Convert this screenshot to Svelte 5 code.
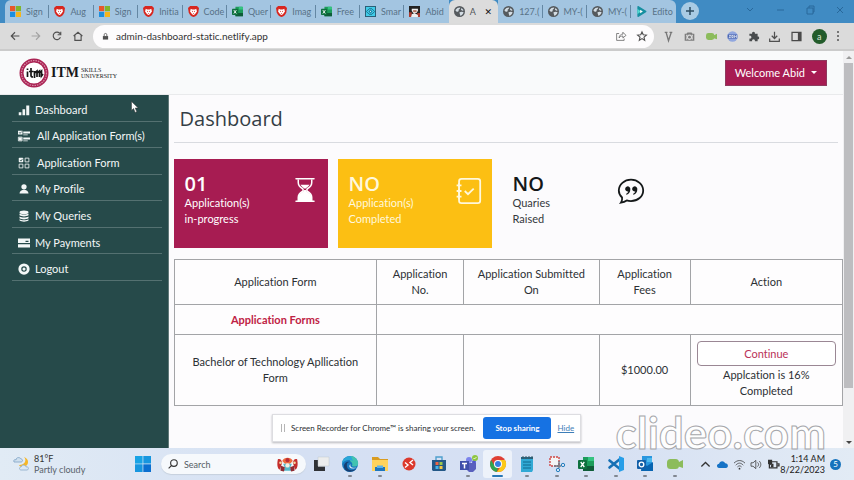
<script>
  const tabs = [
    { icon: 'microsoft', title: 'Sign' },
    { icon: 'shield', title: 'Aug' },
    { icon: 'microsoft', title: 'Sign' },
    { icon: 'shield', title: 'Initia' },
    { icon: 'shield', title: 'Code' },
    { icon: 'excel', title: 'Quer' },
    { icon: 'shield', title: 'Imag' },
    { icon: 'excel', title: 'Free' },
    { icon: 'smart', title: 'Smar' },
    { icon: 'photo', title: 'Abid' },
    { icon: 'globe', title: 'A', active: true },
    { icon: 'globe', title: '127.(' },
    { icon: 'globe', title: 'MY-(' },
    { icon: 'globe', title: 'MY-(' },
    { icon: 'clideo', title: 'Edito' }
  ];

  const menu = [
    { icon: 'bars', label: 'Dashboard' },
    { icon: 'checks', label: 'All Application Form(s)', wide: true },
    { icon: 'grid', label: 'Application Form', wide: true },
    { icon: 'person', label: 'My Profile' },
    { icon: 'database', label: 'My Queries' },
    { icon: 'card', label: 'My Payments' },
    { icon: 'logout', label: 'Logout' }
  ];

  const cards = [
    { tone: 'maroon', count: '01', lines: ['Application(s)', 'in-progress'], icon: 'hourglass' },
    { tone: 'yellow', count: 'NO', lines: ['Application(s)', 'Completed'], icon: 'journal' },
    { tone: 'plain', count: 'NO', lines: ['Quaries', 'Raised'], icon: 'quote' }
  ];

  const extensions = ['letterV', 'camera', 'recorder', 'zoomer', 'puzzle', 'download', 'panel'];

  const apps = [
    { icon: 'taskview', name: 'Task view' },
    { icon: 'edge', name: 'Edge', open: true },
    { icon: 'folder', name: 'File Explorer', open: true },
    { icon: 'remote', name: 'Remote' },
    { icon: 'store', name: 'Store' },
    { icon: 'teams', name: 'Teams', open: true },
    { icon: 'chrome', name: 'Chrome', active: true },
    { icon: 'notepad', name: 'Notepad', open: true },
    { icon: 'snip', name: 'Snipping Tool', open: true },
    { icon: 'excel', name: 'Excel', open: true },
    { icon: 'vscode', name: 'VS Code', open: true },
    { icon: 'outlook', name: 'Outlook', open: true },
    { icon: 'recorder', name: 'Screen Recorder', open: true }
  ];

  const art = {
    microsoft: '<path fill="#e8562a" d="M0 0h7.5v7.5H0z"/><path fill="#7fb52c" d="M8.500 0H16v7.500H8.500z"/><path fill="#1b8fe0" d="M0 8.500h7.500V16H0z"/><path fill="#f5b51c" d="M8.500 8.500H16V16H8.500z"/>',
    shield: '<path fill="#d8261f" d="M3 0h10l3 3-1 6c-1 4-4 6-7 7-3-1-6-3-7-7L0 3z"/><path fill="#fff" d="M4 4l2 1h4l2-1 1 4-3 4-2 1-2-1-3-4z"/><path fill="#d8261f" d="M5.500 6.500l2 1.500-1 1zm5 0l-2 1.500 1 1zM7 10h2l-1 1.500z"/>',
    excel: '<path fill="#1d9c5b" d="M5 1h10a1 1 0 0 1 1 1v12a1 1 0 0 1-1 1H5z"/><path fill="#35c481" d="M10 1h5a1 1 0 0 1 1 1v3h-6z"/><path fill="#0f5c38" d="M5 10h11v4a1 1 0 0 1-1 1H5z"/><rect y="4" width="9" height="9" rx="1" fill="#0e703e"/><path d="M2.700 6l3.600 5M6.300 6l-3.600 5" stroke="#fff" stroke-width="1.300"/>',
    smart: '<rect x=".7" y=".7" width="14.600" height="14.600" fill="#41cce9" stroke="#285d75" stroke-width="1.400"/><path d="M2 8l4-4h4l4 4-4 4H6z" fill="none" stroke="#14617e" stroke-width="1.200"/><path d="M5 8l3-3 3 3-3 3z" fill="#17779a"/><circle cx="8" cy="8" r="1" fill="#bdf4ff"/>',
    photo: '<path fill="#222" d="M0 0h16v16H0z"/><path fill="#aa392f" d="M0 9h4v7H0zM12 10h4v6h-4z"/><path fill="#eee" d="M4 4h9v3l-2 3H6L4 7zM4 12l4-2 5 3v3H3z"/><path fill="#b57664" d="M6 6h5v3H6z"/>',
    globe: '<circle cx="8" cy="8" r="8" fill="#555a5e"/><path fill="#d4dde4" d="M2 6c2-3 4-4 7-4 0 2-1 2-2 3s1 2-1 3-2 0-4-2zM8 9c2-1 5-1 6 0-1 3-3 5-5 5 0-2-1-3-1-5zM11 3l3 3-2 1-2-2z"/>',
    clideo: '<path fill="#168fa0" d="M2 1c0-1 1-1 2-.500L14.500 7c1 .5 1 1.500 0 2L4 15.500c-1 .5-2 .5-2-.500z"/><path fill="#52d7cf" d="M2 4l5 4-5 4z"/><path fill="#fff" d="M6 5.500l4 2.500-4 2.500z"/>',
    back: '<path d="M15 8H2M8 2L2 8l6 6" class="line"/>',
    forward: '<path d="M1 8h13M8 2l6 6-6 6" class="line"/>',
    reload: '<path d="M13.500 10A6 6 0 1 1 13 4.500M14 1v5H9" class="line"/>',
    home: '<path d="M1 8l7-6 7 6M3 7v8h10V7" class="line"/>',
    lock: '<path fill="currentColor" d="M2 7h12v8H2z"/><path d="M5 7V4a3 3 0 0 1 6 0v3" class="line"/>',
    share: '<path d="M5 4H1v11h12v-3M5 11c0-4 3-6 6-6V2l5 5-5 4V8c-3 0-5 1-6 3z" class="thin"/>',
    star: '<path d="M8 1.500l2 4.500 5 .5-3.800 3.300L12.300 15 8 12.200 3.700 15l1.100-5.200L1 6.500l5-.500z" class="line"/>',
    letterV: '<path d="M2.500 2h4M9.500 2h4M4.500 2L8 14l4-12" fill="none" stroke="#777" stroke-width="2"/>',
    camera: '<path fill="#7d7d7d" fill-rule="evenodd" d="M5 2h6l1.500 2H15v10H1V4h2.500zm3 3a4 4 0 1 0 .01 0zM3 5.500v7h2C3 10 3 8 5 5.500zm10 7v-7h-2c2 2.500 2 4.500 0 7z"/><circle cx="8" cy="9" r="2" fill="#7d7d7d"/>',
    recorder: '<rect y="3" width="12" height="10" rx="3.500" fill="#8cbc5c"/><path fill="#8cbc5c" d="M10 7l6-3v8l-6-2z"/>',
    zoomer: '<circle cx="8" cy="8" r="7.500" fill="#91a7df"/><path fill="#4a66b0" d="M1 5h14v6H1z"/><path d="M3 6.500h2.500L3 9.500h2.500M7 6.500h2v3H7zM11 10V6.500l1.500 1.500L14 6.500V10" fill="none" stroke="#fff"/>',
    puzzle: '<path fill="#484b4d" d="M2 4h4c-1-4 5-4 4 0h4v4c3-1 3 5 0 4v3h-4c1-4-5-4-4 0H2v-4c4 1 4-5 0-4z"/>',
    download: '<path d="M8 1v10M4 7l4 4 4-4M1 11v4h14v-4" class="line"/>',
    panel: '<path fill="none" stroke="#4a4a4a" stroke-width="1.800" d="M1.500 2h13v12h-13z"/><path fill="#4a4a4a" d="M10 2h4.500v12H10z"/>',
    bars: '<path fill="currentColor" d="M1 11h3.500v4H1zM6 7h3.500v8H6zM11 2h4v13h-4z"/>',
    checks: '<path d="M7 2h9v2.500H7zM7 10h9v2.500H7zM7 6h6v1H7zM7 14h6v1H7zM0 1h6v5H0zM1 10h4v4H1z" fill="currentColor"/><path d="M.5 9.500h5v5h-5z" class="thin"/><path d="M1.500 3l1.200 1.500L5 2" fill="none" stroke="#264a4a"/>',
    grid: '<path d="M9.500 1.500h5v5h-5zM1.500 9.500h5v5h-5zM9.500 9.500h5v5h-5z" class="thin"/><rect x="1" y="1" width="6" height="6" rx="1" fill="currentColor"/><path d="M2.500 4l1.500 1.500L6 2.500" fill="none" stroke="#264a4a"/>',
    person: '<circle cx="8" cy="5" r="3.500" fill="currentColor"/><path fill="currentColor" d="M2 14c0-3 3-5 6-5s6 2 6 5z"/>',
    database: '<ellipse cx="8" cy="3" rx="6" ry="2.500" fill="currentColor"/><path fill="currentColor" d="M2 4.500c3 2 9 2 12 0V7c-3 2-9 2-12 0zM2 8.500c3 2 9 2 12 0V11c-3 2-9 2-12 0zM2 12.300c3 2 9 2 12 0V14c-3 2-9 2-12 0z"/>',
    card: '<path fill="currentColor" fill-rule="evenodd" d="M0 2h16v6H0zM0 9.500h16V14H0zM10 5h4v1.500h-4z"/>',
    logout: '<circle cx="8" cy="8" r="7.500" fill="currentColor"/><circle cx="8" cy="8" r="3.700" fill="#264a4a"/><path fill="currentColor" d="M8 5.500L10.500 8 8 10.500 5.500 8z"/>',
    hourglass: '<path fill="currentColor" d="M2 1a.5.5 0 0 1 0-1h12a.5.5 0 0 1 0 1zm0 15a.5.5 0 0 1 0-1h12a.5.5 0 0 1 0 1z"/><path d="M3.500 1v2c0 2 1 3 2.700 4 .8.500.8 1.500 0 2-1.700 1-2.700 2-2.700 4v2h9v-2c0-2-1-3-2.700-4-.8-.500-.8-1.500 0-2 1.700-1 2.700-2 2.700-4V1" fill="none" stroke="currentColor"/><path fill="currentColor" d="M5 4.500h6c-.5 1-1.500 1.700-2.500 2.500h-1C6.500 6.200 5.500 5.500 5 4.500M3.500 15v-2c.5-3 3-3 4-5h1c1 2 3.500 2 4 5v2z"/>',
    journal: '<rect x="2.500" y=".5" width="13" height="15" rx="1.500" class="thin"/><path d="M1 4.500h3M1 8h3M1 11.500h3M2.500 3v3M2.500 6.500v3M2.500 10v3M6 8l2 2 3.500-3.500" class="thin"/>',
    quote: '<path d="M2.500 12C1.200 10.800.5 9.400.5 7.700.5 4 3.900 1 8 1s7.500 3 7.500 6.700S12.100 14.200 8 14.200c-1 0-1.800-.1-2.600-.4-1.100.8-2.200 1.200-3.600 1.400.6-.8.900-2 .7-3.200z" class="thin"/><path fill="currentColor" d="M7.200 7.800a1.600 1.600 0 1 1 .4-1c0 2-.9 3-2.300 3.500l-.4-.5c1-.5 1.500-1 1.500-1.900zM11.500 7.800a1.600 1.600 0 1 1 .4-1c0 2-.9 3-2.300 3.500l-.4-.5c1-.5 1.500-1 1.500-1.900z"/>',
    weather: '<path fill="#f5b728" d="M11 1c3 3 1 8-5 8 2 4 9 2 9-3 0-2-1-4-4-5z"/><path fill="#cfe0ef" stroke="#7da1c4" stroke-width=".8" d="M1 6c-1-2 1-3 2-2 0-3 4-3 5-1 2 0 2 3 0 3z"/><path fill="#dbe8f5" stroke="#8babc9" stroke-width=".8" d="M8 14c-2 0-2-3 0-3 1-3 5-2 5 0 3-1 3 3 1 3z"/>',
    windows: '<path fill="#18a3e5" d="M0 0h7.600v7.600H0z"/><path fill="#1796df" d="M8.300 0H16v7.600H8.300zM0 8.300h7.600V16H0z"/><path fill="#0b6fd0" d="M8.300 8.300H16V16H8.300z"/>',
    search: '<circle cx="9.500" cy="6.500" r="5.300" class="line"/><path d="M5.500 10.500L1 15" class="line"/>',
    pinwheel: '<path fill="#c52e2c" d="M1 2c3-1 4 1 5 4l-3 8c-3-2-3-7-2-12zM23 2c-3-1-4 1-5 4l3 8c3-2 3-7 2-12z"/><path fill="#ef6b3d" d="M6 4c2-5 10-5 12 0l-3 3H9z"/><path fill="#54b8c9" d="M7 7h10l-2 5 2 3H7l2-3z"/><path fill="#902b32" d="M4 9l5 2-1 5-4-1zM20 9l-5 2 1 5 4-1z"/><circle cx="12" cy="3" r="2.300" fill="#b92e38"/><circle cx="12" cy="9" r="2.500" fill="#f4eee1"/><circle cx="4" cy="6" r="1.500" fill="#f3d9a1"/><circle cx="20" cy="6" r="1.500" fill="#f3d9a1"/>',
    taskview: '<path fill="#303236" d="M1 4h11v11H1z"/><path fill="#eceded" stroke="#b9bfc6" stroke-width=".4" d="M5 1h11v9H5z"/><path fill="#a4a8ac" d="M5 10h7v1H5z"/>',
    edge: '<circle cx="8" cy="8" r="8" fill="#1877bd"/><path fill="#42c3b0" d="M9 0c5 .5 8 5 7 8.500-1 2.500-5 2.500-6 1.500 1-2 0-4-2-5z"/><path fill="#2aa7d8" d="M0 8C0 3 4 0 9 0l2 5C7 3 2 4 0 8z"/><path fill="#163f73" d="M5 8c-1 5 3 8 9 5-3 4-11 4-12-2-.5-4 3-6 6-5-2 0-3 1-3 2z"/><path fill="#dce6f4" d="M8.500 8c-1 3 2 4.500 6 3.500-2 1.500-6 1.500-7-.5-.5-1 0-2 1-3z"/>',
    folder: '<path fill="#d99c20" d="M0 1h6l2 2h8v5H0z"/><path fill="#ffd35c" d="M0 4h16v11H0z"/><path fill="#1d75bd" d="M3 11h10v4H3z"/><path fill="#5db2e7" d="M5 9.500h6V12H5z"/>',
    remote: '<circle cx="8" cy="8" r="6.500" fill="#dc392c"/><path d="M4 6.500l3 2.500-3 2.500M12 4L9 6.500 12 9" fill="none" stroke="#fff" stroke-width="1.400"/>',
    store: '<path fill="#245887" d="M1 4h14v10l-1 1H2l-1-1z"/><path d="M5 4V1h6v3" fill="none" stroke="#4e9fcd" stroke-width="1.400"/><path fill="#ef6544" d="M4.500 6H7.500v3h-3z"/><path fill="#9bc74c" d="M8.500 6h3v3h-3z"/><path fill="#44b5eb" d="M4.500 10h3v3h-3z"/><path fill="#f5c943" d="M8.500 10h3v3h-3z"/>',
    teams: '<circle cx="9" cy="4" r="3" fill="#7b83eb"/><circle cx="14" cy="6" r="2" fill="#5059c9"/><path fill="#5960bd" d="M6 7h10v6l-3 3H9l-3-3z"/><path fill="#3f4faa" d="M0 5h9v9H0z"/><path d="M2 7.500h5M4.500 7.500v5" stroke="#fff" stroke-width="1.500"/><circle cx="15" cy="2" r="3" fill="#8fc640"/><path d="M13.500 2l1 1 2-2" fill="none" stroke="#fff" stroke-width=".8"/>',
    chrome: '<circle cx="8" cy="8" r="8" fill="#df4034"/><path fill="#2fa551" d="M1.100 4L5 10.500 8 12l-1.200 3.900A8 8 0 0 1 1.100 4z"/><path fill="#fbc918" d="M15 4a8 8 0 0 1-8 12l4.200-6L12 8 9 4z"/><circle cx="8" cy="8" r="4" fill="#fff"/><circle cx="8" cy="8" r="3" fill="#367ee1"/>',
    notepad: '<path fill="#31a9d5" d="M2 2h12v12l-1 2H2z"/><path fill="#256583" d="M2 1h12v2H2z"/><path d="M4 0v3M7 0v3M10 0v3M13 0v3" stroke="#3d5863"/><path d="M4 6h8M4 9h8M4 12h8" stroke="#10688e"/>',
    snip: '<path d="M1 1h9v9H1z" fill="#f3f4f5" stroke="#cf4543" stroke-width="1.400" stroke-dasharray="2 1"/><path d="M10 5v7M5 10h7" stroke="#6f7b86" stroke-width="1.400"/><circle cx="9" cy="14" r="1.700" fill="none" stroke="#2480be"/><circle cx="14" cy="9" r="1.700" fill="none" stroke="#2480be"/>',
    vscode: '<path d="M12 3L1.500 11.500M12 13L1.500 4.500" stroke="#1670b5" stroke-width="2.600" stroke-linecap="round"/><path fill="#279ee8" d="M11 0l5 2v12l-5 2z"/>',
    outlook: '<path fill="#2a97df" d="M5 0h10v10H5z"/><path fill="#0864b1" d="M5 6l5 4 6-4v9H4z"/><path fill="#4db9ee" d="M10 2h5v4h-5z"/><rect y="4" width="9" height="9" rx="1" fill="#125fa8"/><circle cx="4.500" cy="8.500" r="2.300" fill="none" stroke="#fff" stroke-width="1.300"/>',
    chevron: '<path d="M2 11l6-6 6 6" class="line"/>',
    cloud: '<path fill="#1673c6" d="M3 13c-4 0-4-6 0-6 1-5 7-5 9-1 5 0 5 7 1 7z"/>',
    wifi: '<path d="M0 6c5-5 11-5 16 0M2.500 9c4-4 7-4 11 0M5 11.500c2-2 4-2 6 0" class="thin"/><circle cx="8" cy="14" r="1.300" fill="currentColor"/>',
    sound: '<path d="M0 5.500h3L7 2v12l-4-3.500H0zM9.500 5c2 2 2 4 0 6M12 3c3 3 3 7 0 10" class="thin"/>',
    battery: '<path d="M2 4h11v9H2zM14 7h2v3h-2" class="line"/><path fill="currentColor" d="M0 1h6v6L3 9 0 7zM5 7h3v5H4z"/>'
  };
</script>

{#snippet icon(name, wide = false)}
  <svg class="icon" viewBox={wide ? '0 0 24 16' : '0 0 16 16'} aria-hidden="true">{@html art[name]}</svg>
{/snippet}

<div class="screen">
  <header class="browser">
    <div class="strip">
      <nav class="tabs" aria-label="Browser tabs">
        {#each tabs as tab, i}
          <button class="tab" class:active={tab.active} class:before={tabs[i + 1]?.active || i === tabs.length - 1}>
            {@render icon(tab.icon)}
            <span class="title">{tab.title}</span>
            {#if tab.active}<span class="close">✕</span>{/if}
          </button>
        {/each}
      </nav>
      <button class="new" aria-label="New tab">
        <svg viewBox="0 0 10 10"><path d="M5 1v8M1 5h8" /></svg>
      </button>
      <div class="window">
        <svg viewBox="0 0 12 12"><path d="M3 4l3 3 3-3" /></svg>
        <svg viewBox="0 0 12 12"><path d="M3 6h7" /></svg>
        <svg viewBox="0 0 12 12"><path d="M3 4h6v6H3zM5 4V2h5v6H9" /></svg>
        <svg viewBox="0 0 12 12"><path d="M3 3l6 6M9 3l-6 6" /></svg>
      </div>
    </div>
    <div class="toolbar">
      <div class="history">
        <button aria-label="Back">{@render icon('back')}</button>
        <button class="dim" aria-label="Forward">{@render icon('forward')}</button>
        <button aria-label="Reload">{@render icon('reload')}</button>
        <button aria-label="Home">{@render icon('home')}</button>
      </div>
      <div class="address">
        {@render icon('lock')}
        <input aria-label="Address" value="admin-dashboard-static.netlify.app" />
        {@render icon('share')}
        {@render icon('star')}
      </div>
      <div class="extensions">
        {#each extensions as name}
          <button aria-label={name}>{@render icon(name)}</button>
        {/each}
        <button class="avatar">a</button>
        <button class="more" aria-label="More"><i></i><i></i><i></i></button>
      </div>
    </div>
  </header>

  <div class="viewport">
    <div class="page">
      <header class="top">
        <a class="brand" href="#home">
          <svg class="seal" viewBox="0 0 30 30" aria-hidden="true">
            <circle cx="15" cy="15" r="12.500" fill="#fff" stroke="#aa2454" stroke-width="4" />
            <circle cx="15" cy="15" r="12.500" fill="none" stroke="#d98da7" stroke-width="1.200" stroke-dasharray="1.500 1" />
            <path d="M8.500 13.500V19M8.500 10.500V12M12 10v7.500q0 1.500 2 1.500M10 13.500h4.500M15.500 20v-7M15.500 15l2.500-2v6M18 15l2.500-2v6M20.500 15l2-2v5l1.500-2" fill="none" stroke="#161616" stroke-width="1.700" />
          </svg>
          <span class="itm">ITM</span>
          <span class="skills">SKILLS<br />UNIVERSITY</span>
        </a>
        <button class="welcome">Welcome Abid <i></i></button>
      </header>
      <div class="body">
        <nav class="side" aria-label="Main menu">
          <ul>
            {#each menu as item}
              <li><a href="#menu" class:wide={item.wide}>{@render icon(item.icon)}{item.label}</a></li>
            {/each}
          </ul>
        </nav>
        <main>
          <h1>Dashboard</h1>
          <section class="cards">
            {#each cards as card}
              <article class={card.tone}>
                <div>
                  <h2>{card.count}</h2>
                  <p>{card.lines[0]}<br />{card.lines[1]}</p>
                </div>
                {@render icon(card.icon)}
              </article>
            {/each}
          </section>
          <table>
            <colgroup><col class="c1" /><col class="c2" /><col class="c3" /><col class="c4" /><col /></colgroup>
            <thead>
              <tr>
                <th>Application Form</th>
                <th>Application<br />No.</th>
                <th>Application Submitted<br />On</th>
                <th>Application<br />Fees</th>
                <th>Action</th>
              </tr>
            </thead>
            <tbody>
              <tr class="group"><th>Application Forms</th><td colspan="4"></td></tr>
              <tr class="form">
                <td>Bachelor of Technology Apllication<br />Form</td>
                <td></td>
                <td></td>
                <td>$1000.00</td>
                <td class="action"><button>Continue</button>Applcation is 16%<br />Completed</td>
              </tr>
            </tbody>
          </table>
        </main>
      </div>
    </div>
    <div class="scroll" aria-hidden="true"><i class="up"></i><div class="track"><div class="thumb"></div></div><i class="down"></i></div>
    <div class="sharing">
      <span class="grip"></span>
      <span class="note">Screen Recorder for Chrome™ is sharing your screen.</span>
      <button>Stop sharing</button>
      <a href="#hide">Hide</a>
    </div>
  </div>

  <footer class="taskbar">
    <div class="weather">{@render icon('weather')}<p>81°F<br /><span>Partly cloudy</span></p></div>
    <button class="start" aria-label="Start">{@render icon('windows')}</button>
    <label class="search">{@render icon('search')}<input placeholder="Search" aria-label="Search" />{@render icon('pinwheel', true)}</label>
    <div class="apps">
      {#each apps as app}
        <button aria-label={app.name} class:open={app.open} class:active={app.active}>{@render icon(app.icon)}</button>
      {/each}
    </div>
    <div class="tray">
      {@render icon('chevron')}{@render icon('cloud')}{@render icon('wifi')}{@render icon('sound')}{@render icon('battery')}
    </div>
    <p class="clock">1:14 AM<br />8/22/2023</p>
    <span class="badge">5</span>
  </footer>

  <svg class="pointer" viewBox="0 0 8 12" aria-hidden="true"><path d="M.5.5v9l2-2 1.700 4 1.600-.7L4.200 7H7.200z" fill="#fff" stroke="#333" stroke-width=".5" /></svg>
  <div class="watermark">clideo.com</div>
</div>

<style>
  :global(body) { margin: 0; }
  * { box-sizing: border-box; }
  .screen {
    position: relative;
    display: flex;
    flex-direction: column;
    height: 100vh;
    overflow: hidden;
    background: #fcfbfd;
    color: #2c3034;
    font: 11px/16px Lato, "Open Sans", sans-serif;
    font-variant-ligatures: none;
  }
  button, input { font: inherit; color: inherit; border: 0; padding: 0; margin: 0; background: none; min-width: 0; font-variant-ligatures: none; }
  a { color: inherit; text-decoration: none; }
  p, h1, h2, ul { margin: 0; padding: 0; }
  .icon { display: block; flex: none; width: 12px; height: 12px; overflow: visible; }
  .icon :global(.line) { fill: none; stroke: currentColor; stroke-width: 1.8; }
  .icon :global(.thin) { fill: none; stroke: currentColor; stroke-width: 1.1; }

  .strip { display: flex; height: 23px; background: #408bc3; padding-left: 5px; }
  .tabs { display: flex; width: 79%; }
  .tab {
    position: relative;
    display: flex;
    flex: 1 1 0;
    align-items: center;
    gap: 5px;
    padding: 0 1px 0 5px;
    background: #a3c5e1;
    color: #587287;
    font-size: 9px;
  }
  .tab:first-child { border-radius: 6px 0 0 0; }
  .tab:last-child { border-radius: 0 6px 0 0; }
  .tab .icon { width: 11px; height: 11px; }
  .tab::after { content: ""; position: absolute; right: 0; top: 5px; width: 1px; height: 13px; background: #6487a3; }
  .tab.before::after, .tab.active::after { display: none; }
  .tab.active { background: #dcdcdc; color: #50555a; border-radius: 6px 6px 0 0; padding-right: 6px; }
  .title { flex: 1; white-space: nowrap; text-align: left; }
  .close { color: #111; font: bold 9px/12px "DejaVu Sans", sans-serif; }
  .new { width: 18px; height: 18px; margin: 2px 0 0 5px; border-radius: 50%; background: #a9cbe4; display: grid; place-items: center; }
  .new svg { width: 10px; fill: none; stroke: #2d4c60; stroke-width: 1.5; }
  .window { flex: 1; display: flex; justify-content: flex-end; gap: 18px; padding: 4px 8px 0 0; }
  .window svg { width: 12px; height: 12px; fill: none; stroke: #28689b; }
  .toolbar { display: flex; align-items: center; height: 28px; padding: 0 8px 0 4px; background: #dbdbdb; color: #505050; border-bottom: 2px solid #cbcbcb; }
  .history { display: flex; width: 89px; }
  .history button { width: 21px; height: 21px; display: grid; place-items: center; }
  .history .icon { width: 10px; height: 10px; }
  .dim { color: #a3a3a3; }
  .address { flex: 1; display: flex; align-items: center; gap: 11px; height: 23px; padding: 0 7px 0 9px; border-radius: 12px; background: #fdfcfd; }
  .address .icon { width: 10px; height: 10px; }
  .address .icon:first-child { width: 7px; height: 9px; margin-right: -4px; }
  .address input { flex: 1; font-size: 10px; color: #333; }
  .extensions { display: flex; align-items: center; justify-content: space-between; width: 192px; padding: 0 7px 0 9px; }
  .extensions .icon { width: 11px; height: 11px; }
  .extensions .avatar { width: 15px; height: 15px; border-radius: 50%; background: #235c2b; color: #dcebd8; font-size: 9px; line-height: 13px; }
  .more { display: grid; gap: 2px; width: 2px; }
  .more i { width: 2px; height: 2px; background: #555; border-radius: 50%; }

  .viewport { position: relative; flex: 1; min-height: 0; display: flex; }
  .page { flex: 1; min-width: 0; display: flex; flex-direction: column; }
  .top { display: flex; align-items: center; justify-content: space-between; height: 44px; padding: 0 16px 0 19px; background: #f9fafb; border-bottom: 1px solid #e9eaec; }
  .brand { display: flex; align-items: center; color: #17171a; }
  .seal { width: 30px; height: 30px; }
  .itm { margin: 0 2px; font: bold 14px/18px "Liberation Serif", serif; }
  .skills { font: 6px/6px "Liberation Serif", serif; }
  .welcome { display: flex; align-items: center; gap: 6px; height: 26px; padding: 0 10px; background: #a71c52; color: #fff; box-shadow: 0 0 0 1px #8e3a5e inset; }
  .welcome i { border: 3px solid transparent; border-top-color: #fff; border-bottom: 0; }

  .body { flex: 1; display: flex; min-height: 0; }
  .side { width: 20%; background: #264a4a; color: #f3f7f7; border-right: 1px solid #617979; }
  .side ul { display: grid; grid-auto-rows: 1fr; height: 186px; margin: 0 6px 0 12px; list-style: none; }
  .side li { border-bottom: 1px solid #547171; display: flex; align-items: center; padding: 4px 0 0 6px; }
  .side a { display: flex; align-items: center; gap: 5px; white-space: nowrap; }
  .side a.wide { gap: 7px; }
  main { flex: 1; min-width: 0; padding-left: 5px; }
  h1 { margin-right: 5px; padding: 8px 0 7px 6px; border-bottom: 1px solid #d9dbe0; font: 500 20px/32px "Open Sans", sans-serif; color: #343e46; }
  .cards { display: grid; grid-template-columns: repeat(3, 23%); gap: 10px; padding: 16px 0 11px; }
  .cards article { display: flex; justify-content: space-between; height: 89px; padding: 14px 11px 0 11px; }
  .cards h2 { font: 600 20px/22px "Open Sans", sans-serif; }
  .cards .icon { width: 26px; height: 26px; margin-top: 5px; }
  .cards .maroon .icon { width: 24px; height: 24px; }
  .maroon { background: #a71c52; color: #fff; }
  .yellow { background: #fcbf13; color: #fff8dc; }
  .plain { color: #34383c; }
  .plain h2, .plain .icon { color: #141819; }

  table { width: 100%; border-collapse: collapse; table-layout: fixed; text-align: center; background: #fefdfe; }
  .c1 { width: 30.3%; } .c2 { width: 13%; } .c3 { width: 20.3%; } .c4 { width: 13.6%; }
  th, td { padding: 0; border: 1px solid #a3a4a7; font-weight: 400; }
  thead th { height: 45px; }
  .group th { height: 30px; color: #c02244; font-weight: 700; }
  .form td { height: 71px; }
  .action { padding: 0 6px; }
  .action button { display: block; width: 100%; height: 25px; margin-bottom: 1px; border: 1px solid #9a8794; border-radius: 4px; color: #ba3158; background: #fff; }

  .scroll { width: 11px; background: #f0f0f2; display: flex; flex-direction: column; align-items: center; padding: 5px 0 4px; }
  .scroll i { border: 3px solid transparent; }
  .scroll .up { border-bottom-color: #9a9a9a; border-top: 0; margin-bottom: 4px; }
  .scroll .down { border-top-color: #444; border-bottom: 0; margin-top: 4px; }
  .track { flex: 1; }
  .thumb { width: 9px; height: 87%; background: #bdbdc0; }
  .sharing { position: absolute; left: 272px; bottom: 6px; display: flex; align-items: center; height: 28px; padding: 0 6px 0 8px; background: #fff; border: 1px solid #dddde1; box-shadow: 0 1px 2px #b9b9bd; font-size: 8px; white-space: nowrap; }
  .grip { width: 4px; height: 8px; border: solid #b5b5b5; border-width: 0 1px; margin-right: 6px; }
  .sharing button { height: 22px; margin: 0 6px 0 8px; padding: 0 12px; border-radius: 3px; background: #1672e3; color: #fff; font-weight: 700; }
  .sharing a { color: #3d7eb8; text-decoration: underline; }

  .taskbar { display: flex; align-items: center; height: 32px; background: linear-gradient(90deg, #e1ebf5, #d5e0f3 35%, #d6e0f3 70%, #e2ebf5); color: #333; font-size: 8px; line-height: 11px; }
  .weather { display: flex; align-items: center; gap: 5px; width: 122px; margin-left: 13px; }
  .weather .icon { width: 16px; height: 16px; }
  .weather span { color: #59636b; }
  .start .icon { width: 16px; height: 16px; }
  .search { display: flex; align-items: center; width: 145px; height: 20px; margin-left: 10px; padding: 0 8px 0 7px; border-radius: 10px; background: #f6f9fc; box-shadow: 0 1px 1px #c6d0dd; }
  .search .icon { width: 10px; height: 10px; }
  .search .icon:last-child { width: 21px; height: 17px; }
  .search input { flex: 1; margin-left: 6px; font-size: 9px; }
  .search input::placeholder { color: #555d64; opacity: 1; }
  .apps { display: flex; flex: 0 1 383px; justify-content: space-between; }
  .apps button { position: relative; display: grid; place-items: center; width: 29px; height: 28px; border-radius: 3px; }
  .apps .icon { width: 16px; height: 16px; }
  .apps .active { background: #edf2fa; }
  .apps .open::after, .apps .active::after { content: ""; position: absolute; bottom: 1px; width: 4px; height: 2px; border-radius: 1px; background: #818791; }
  .apps .active::after { width: 11px; background: #2877b6; }
  .tray { display: flex; align-items: center; justify-content: space-between; margin-left: auto; gap: 6px; }
  .tray .icon { width: 11px; height: 11px; }
  .weather p, .clock { font-size: 9px; }
  .clock { width: 46px; text-align: right; white-space: nowrap; color: #222; }
  .badge { width: 11px; height: 11px; margin: 0 13px 0 5px; border-radius: 50%; background: #1673bd; color: #fff; text-align: center; }

  .pointer { position: absolute; left: 131px; top: 101px; width: 8px; height: 12px; }
  .watermark { position: absolute; right: 28px; bottom: 28px; font: bold 44px/40px Lato, sans-serif; color: #ffffffd0; -webkit-text-stroke: 1px #a6a7ab; pointer-events: none; }
</style>
